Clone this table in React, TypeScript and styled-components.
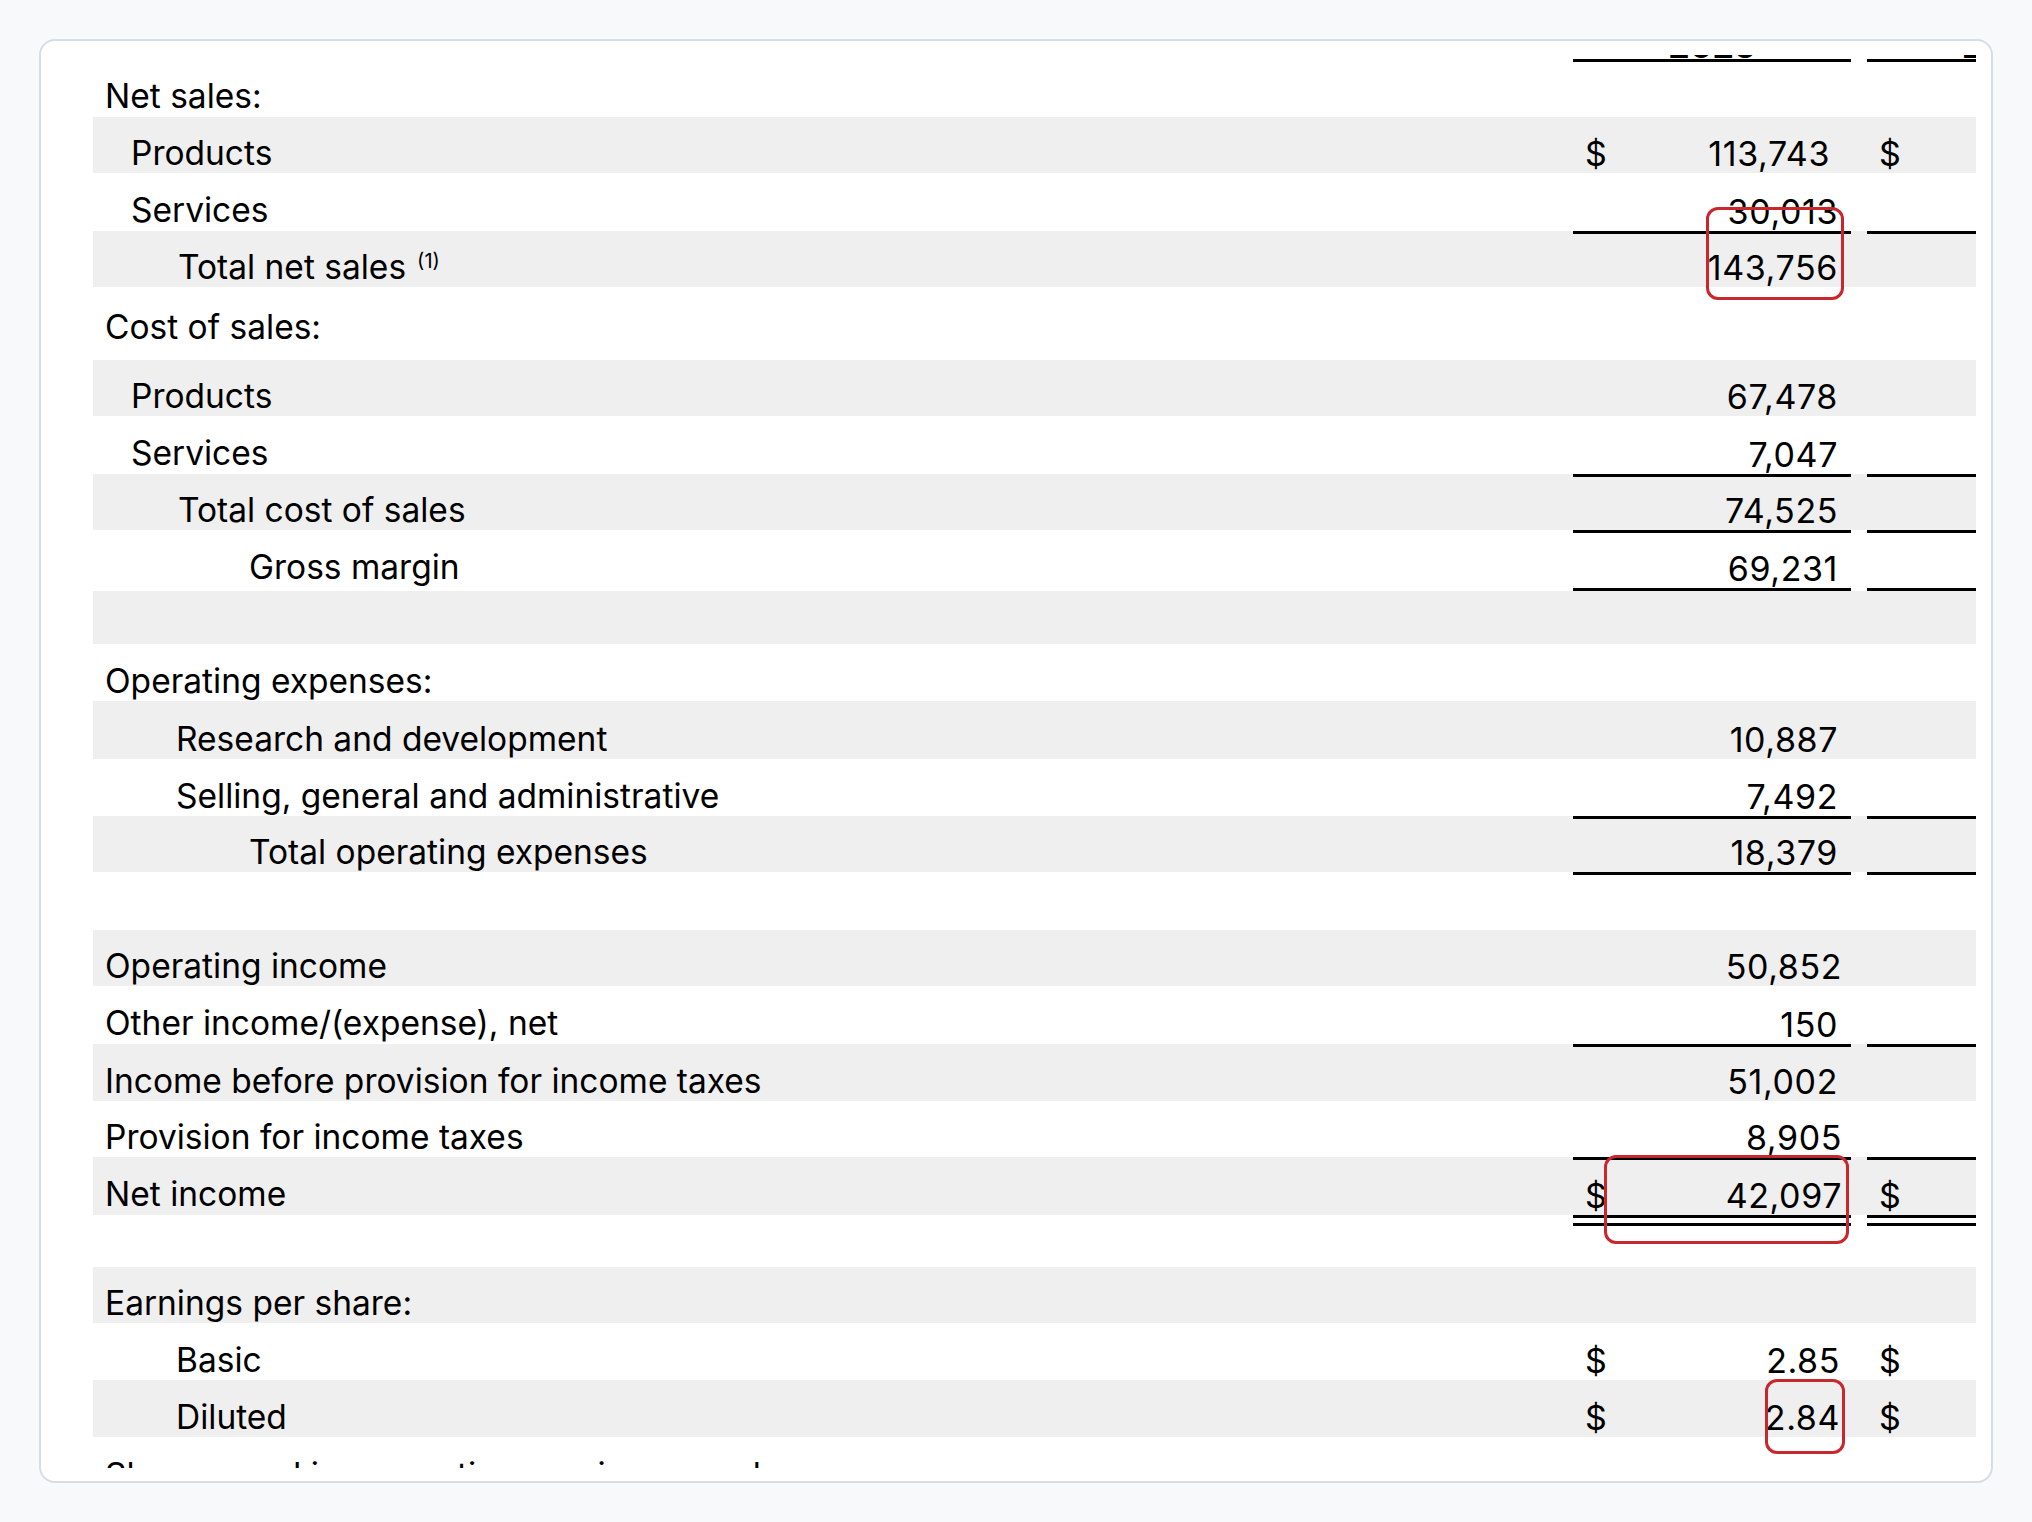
import React from "react";
import styled, { createGlobalStyle, css } from "styled-components";

const GlobalStyle = createGlobalStyle`
  html, body {
    margin: 0;
    padding: 0;
    background: #f7f9fb;
  }
  body {
    font-family: Inter, "Noto Sans", "Liberation Sans", sans-serif;
    color: #000;
  }
  *, *::before, *::after {
    box-sizing: border-box;
  }
`;

const Page = styled.main`
  width: 2032px;
  height: 1522px;
  padding: 39px;
`;

const Card = styled.section`
  position: relative;
  width: 1954px;
  height: 1444px;
  background: #ffffff;
  border: 2px solid #d6dde3;
  border-radius: 16px;
  padding: 14px 15px 13px 52px;
`;

const Viewport = styled.div`
  width: 100%;
  height: 100%;
  overflow: hidden;
`;

const Sheet = styled.div`
  width: 2052px;
  margin-top: -43px;
`;

const Row = styled.div<{ $h: number; $shade: boolean }>`
  display: flex;
  height: ${(p) => p.$h}px;
  background: ${(p) => (p.$shade ? "#efefef" : "transparent")};
`;

const cellText = css`
  font-size: 34px;
  line-height: 1.15;
  white-space: nowrap;
`;

const Label = styled.div<{ $indent: number; $pb: number }>`
  ${cellText};
  font-size: 33.5px;
  flex: none;
  width: 1480px;
  display: flex;
  align-items: flex-end;
  padding-left: ${(p) => 12 + p.$indent}px;
  padding-bottom: ${(p) => p.$pb}px;
`;

const Sup = styled.sup`
  font-size: 20px;
  line-height: 1;
  vertical-align: 11px;
  margin-left: 11px;
`;

type TopRule = "none" | "single" | "double";

const Amount = styled.div<{ $top: TopRule; $bottom: boolean; $pr: number }>`
  ${cellText};
  letter-spacing: 0.6px;
  flex: none;
  width: 278px;
  display: flex;
  align-items: flex-end;
  justify-content: space-between;
  padding: 0 ${(p) => p.$pr}px 0 12px;
  border-top: ${(p) => (p.$top === "none" ? "none" : "3px solid #000")};
  border-bottom: ${(p) => (p.$bottom ? "3px solid #000" : "none")};
  ${(p) =>
    p.$top === "double" &&
    css`
      background: linear-gradient(#000, #000) 0 5px / 100% 3px no-repeat;
    `}
`;

const HeadCell = styled.div`
  flex: none;
  width: 278px;
  display: flex;
  align-items: flex-end;
  justify-content: center;
  font-size: 34px;
  font-weight: 700;
  line-height: 0.8;
  border-bottom: 3px solid #000;
`;

const HeadLabel = styled.div`
  flex: none;
  width: 1480px;
`;

const Gap = styled.div`
  flex: none;
  width: 16px;
`;

const Mark = styled.div<{ $x: number; $y: number; $w: number; $h: number }>`
  position: absolute;
  left: ${(p) => p.$x}px;
  top: ${(p) => p.$y}px;
  width: ${(p) => p.$w}px;
  height: ${(p) => p.$h}px;
  border: 3px solid #c8282d;
  border-radius: 12px;
  pointer-events: none;
`;

type Line = {
  label: string;
  sup?: string;
  indent?: number;
  h: number;
  pb?: number;
  value?: string;
  pr?: number;
  cur?: boolean;
  cur2?: boolean;
  top?: TopRule;
  bottom?: boolean;
};

const lines: Line[] = [
  { label: "Net sales:", h: 55, pb: 1 },
  { label: "Products", indent: 26, h: 56, value: "113,743", pr: 21, cur: true, cur2: true },
  { label: "Services", indent: 26, h: 58, pb: 1, value: "30,013" },
  { label: "Total net sales", sup: "(1)", indent: 73, h: 56, value: "143,756", top: "single" },
  { label: "Cost of sales:", h: 73, pb: 13 },
  { label: "Products", indent: 26, h: 56, value: "67,478" },
  { label: "Services", indent: 26, h: 58, pb: 1, value: "7,047" },
  { label: "Total cost of sales", indent: 73, h: 56, value: "74,525", top: "single" },
  { label: "Gross margin", indent: 144, h: 61, pb: 4, value: "69,231", top: "single", bottom: true },
  { label: "", h: 53 },
  { label: "Operating expenses:", h: 57 },
  { label: "Research and development", indent: 71, h: 58, value: "10,887" },
  { label: "Selling, general and administrative", indent: 71, h: 57, value: "7,492" },
  { label: "Total operating expenses", indent: 144, h: 56, value: "18,379", top: "single" },
  { label: "", h: 58, top: "single" },
  { label: "Operating income", h: 56, value: "50,852", pr: 9 },
  { label: "Other income/(expense), net", h: 58, pb: 1, value: "150" },
  { label: "Income before provision for income taxes", h: 57, value: "51,002", top: "single" },
  { label: "Provision for income taxes", h: 56, value: "8,905", pr: 9 },
  { label: "Net income", h: 58, pb: 1, value: "42,097", pr: 9, cur: true, cur2: true, top: "single" },
  { label: "", h: 52, top: "double" },
  { label: "Earnings per share:", h: 56 },
  { label: "Basic", indent: 71, h: 57, value: "2.85", pr: 11, cur: true, cur2: true },
  { label: "Diluted", indent: 71, h: 57, value: "2.84", pr: 11, cur: true, cur2: true },
  { label: "Shares used in computing earnings per share:", h: 58 },
];

export default function App() {
  return (
    <>
      <GlobalStyle />
      <Page>
        <Card>
          <Viewport>
            <Sheet>
              <Row $h={50} $shade={false}>
                <HeadLabel />
                <HeadCell>2025</HeadCell>
                <Gap />
                <HeadCell>2024</HeadCell>
              </Row>
              {lines.map((l, i) => {
                const top = l.top ?? "none";
                const bottom = !!l.bottom;
                return (
                  <Row key={i} $h={l.h} $shade={i % 2 === 1}>
                    <Label $indent={l.indent ?? 0} $pb={l.pb ?? 0}>
                      <span>
                        {l.label}
                        {l.sup && <Sup>{l.sup}</Sup>}
                      </span>
                    </Label>
                    <Amount $top={top} $bottom={bottom} $pr={l.pr ?? 13}>
                      <span>{l.cur ? "$" : ""}</span>
                      <span>{l.value ?? ""}</span>
                    </Amount>
                    <Gap />
                    <Amount $top={top} $bottom={bottom} $pr={13}>
                      <span>{l.cur2 ? "$" : ""}</span>
                      <span></span>
                    </Amount>
                  </Row>
                );
              })}
            </Sheet>
          </Viewport>
          <Mark $x={1665} $y={166} $w={138} $h={93} />
          <Mark $x={1563} $y={1114} $w={245} $h={89} />
          <Mark $x={1724} $y={1338} $w={80} $h={75} />
        </Card>
      </Page>
    </>
  );
}
